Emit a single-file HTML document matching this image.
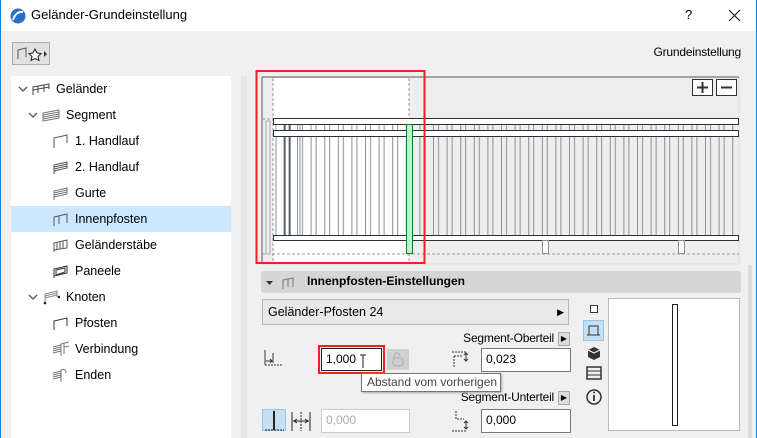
<!DOCTYPE html>
<html><head><meta charset="utf-8"><style>
*{margin:0;padding:0;box-sizing:border-box}
body{width:757px;height:438px;overflow:hidden;background:#f0f0f0;font-family:"Segoe UI","Liberation Sans",sans-serif;font-size:12px;color:#000;position:relative}
.a{position:absolute}
.title{left:0;top:0;width:757px;height:31px;background:#fff;border-left:1px solid #1883d7;border-right:1px solid #1883d7}
.tree{left:11px;top:76px;width:220px;height:362px;background:#fff}
.row{position:absolute;left:0;width:220px;height:26px;line-height:26px;font-size:12.5px}
.inp{background:#fff;border:1px solid #7a7a7a;height:23px;line-height:21px;padding-left:4px;font-size:12px}
.chev{position:absolute;top:9px}
</style></head><body>
<div class="a title">
 <svg class="a" style="left:9px;top:8px" width="16" height="16"><circle cx="8" cy="8" r="7.5" fill="#2a6fc9"/><path d="M3 12 Q6 3 13 4" stroke="#fff" stroke-width="2" fill="none"/></svg>
 <div class="a" style="left:30px;top:7px;font-size:13px">Geländer-Grundeinstellung</div>
 <div class="a" style="left:684px;top:7px;font-size:13px">?</div>
 <svg class="a" style="left:727px;top:9px" width="13" height="13"><path d="M1 1L12 12M12 1L1 12" stroke="#222" stroke-width="1.2"/></svg>
</div>
<div class="a" style="left:0;top:31px;width:1px;height:407px;background:#1883d7"></div>
<div class="a" style="left:756px;top:31px;width:1px;height:407px;background:#1883d7"></div>
<div class="a" style="left:12px;top:42px;width:38px;height:23px;border:1px solid #adadad;background:#e1e1e1">
 <svg width="36" height="21"><path d="M5 16V7l8-2v9" stroke="#555" fill="none"/><path d="M22 6l2 4 4 .5-3 3 1 4-4-2-4 2 1-4-3-3 4-.5z" stroke="#222" fill="#fff"/><path d="M31 8l3 3-3 3z" fill="#333"/></svg>
</div>
<div class="a" style="right:16px;top:45px;font-size:12px;letter-spacing:-0.2px">Grundeinstellung</div>

<div class="a tree">
 <div class="row" style="top:0"><svg class="chev" style="left:7px" width="10" height="8"><path d="M1 2l4 4 4-4" stroke="#555" fill="none" stroke-width="1.3"/></svg><svg class="a" style="left:21px;top:6px" width="18" height="14"><path d="M1 13V5l16-3v5M1 8l16-3M6 4v7M12 3v7" stroke="#444" fill="none"/></svg><span class="a" style="left:45px">Geländer</span></div>
 <div class="row" style="top:26px"><svg class="chev" style="left:17px" width="10" height="8"><path d="M1 2l4 4 4-4" stroke="#555" fill="none" stroke-width="1.3"/></svg><svg class="a" style="left:31px;top:6px" width="18" height="14"><path d="M1 13V5l16-3v8L1 13zM1 7l16-3M1 9l16-3M1 11l16-3" stroke="#777" fill="none"/></svg><span class="a" style="left:55px">Segment</span></div>
 <div class="row" style="top:52px"><svg class="a" style="left:41px;top:6px" width="16" height="15"><path d="M2 14V4l13-3v8" stroke="#555" fill="none"/></svg><span class="a" style="left:64px">1. Handlauf</span></div>
 <div class="row" style="top:78px"><svg class="a" style="left:41px;top:6px" width="16" height="15"><path d="M2 14V5l13-3v6L2 11M2 7l13-3M2 9l13-3" stroke="#555" fill="none"/></svg><span class="a" style="left:64px">2. Handlauf</span></div>
 <div class="row" style="top:104px"><svg class="a" style="left:41px;top:6px" width="16" height="15"><path d="M2 14V5l13-3v6L2 11M2 7l13-3M2 9l13-3" stroke="#777" fill="none"/></svg><span class="a" style="left:64px">Gurte</span></div>
 <div class="row" style="top:130px;background:#cce8ff"><svg class="a" style="left:41px;top:6px" width="16" height="15"><path d="M2 14V5l13-3v9M7 4v8" stroke="#555" fill="none"/></svg><span class="a" style="left:64px">Innenpfosten</span></div>
 <div class="row" style="top:156px"><svg class="a" style="left:41px;top:6px" width="16" height="15"><path d="M2 14V5l13-3v8L2 12M5 5v7M8 4v7M11 3v7" stroke="#555" fill="none"/></svg><span class="a" style="left:64px">Geländerstäbe</span></div>
 <div class="row" style="top:182px"><svg class="a" style="left:41px;top:6px" width="16" height="15"><path d="M2 14V5l13-3v7L2 12zM4 6l9-2v4l-9 3z" stroke="#333" fill="none"/></svg><span class="a" style="left:64px">Paneele</span></div>
 <div class="row" style="top:208px"><svg class="chev" style="left:17px" width="10" height="8"><path d="M1 2l4 4 4-4" stroke="#555" fill="none" stroke-width="1.3"/></svg><svg class="a" style="left:31px;top:5px" width="18" height="16"><path d="M3 14V5l12-3v6M3 7l12-3M3 9l12-3" stroke="#888" fill="none"/><circle cx="3" cy="14" r="1.3" fill="#222"/><circle cx="17" cy="8" r="1.3" fill="#222"/></svg><span class="a" style="left:55px">Knoten</span></div>
 <div class="row" style="top:234px"><svg class="a" style="left:41px;top:6px" width="16" height="15"><path d="M2 14V5l13-3v8" stroke="#333" fill="none"/></svg><span class="a" style="left:64px">Pfosten</span></div>
 <div class="row" style="top:260px"><svg class="a" style="left:41px;top:5px" width="18" height="16"><path d="M1 6l8-2M1 8l8-2M1 10l8-2M1 12l8-2M9 3v12M12 3v10M9 3l8-2M12 6l5-1" stroke="#777" fill="none"/></svg><span class="a" style="left:64px">Verbindung</span></div>
 <div class="row" style="top:286px"><svg class="a" style="left:41px;top:5px" width="16" height="16"><path d="M1 6l8-2M1 8l8-2M1 10l8-2M1 12l8-2M9 3v12M9 3q5-2 5 3" stroke="#777" fill="none"/></svg><span class="a" style="left:64px">Enden</span></div>
</div>
<div class="a" style="left:241px;top:76px;width:6px;height:362px;background:#e6e6e6"></div>

<svg class="a" style="left:0;top:0" width="757" height="438">
 <defs><pattern id="b" patternUnits="userSpaceOnUse" x="297" y="0" width="13.6" height="10"><rect x="0.5" y="-1" width="5" height="12" fill="none" stroke="#8a9096"/></pattern></defs>
 <rect x="262" y="77" width="477" height="187" fill="#eeeeee" stroke="#dcdcdc"/>
 <path d="M262 77H739" stroke="#888" stroke-width="1.5"/><path d="M262 77V264" stroke="#888" stroke-width="1.5"/>
 <rect x="273" y="78" width="136" height="185" fill="#fff"/>
 <path d="M273 78V264M409 78V264M262 119H273M262 254H739" stroke="#999" stroke-dasharray="3 2" fill="none"/>
 <rect x="296" y="124" width="441" height="111" fill="url(#b)"/>
 <path d="M276 124V235M284 124V235M289 124V235M300 124V235" stroke="#8a9096"/>
 <path d="M285 124V235M290 124V235" stroke="#2a3138"/>
 <rect x="266" y="121" width="4" height="133" fill="none" stroke="#aaa"/>
 <rect x="273.5" y="118.5" width="465" height="6" fill="#fff" stroke="#2a3138"/>
 <rect x="273.5" y="130.5" width="465" height="6" fill="#fff" stroke="#2a3138"/>
 <rect x="273.5" y="235.5" width="465" height="5" fill="#fff" stroke="#2a3138"/>
 <rect x="542.5" y="240.5" width="6" height="13" fill="#fff" stroke="#8a9096"/>
 <rect x="678.5" y="240.5" width="6" height="13" fill="#fff" stroke="#8a9096"/>
 <rect x="406.5" y="124.5" width="6" height="129" fill="#bff0c8" stroke="#1a7a2a"/>
 <rect x="256.5" y="71" width="168" height="192" fill="none" stroke="#ee2222" stroke-width="2"/>
 <rect x="692.5" y="79.5" width="20" height="16" fill="#fff" stroke="#2a3138"/><path d="M697 87.5h11M702.5 82v11" stroke="#2a3138" stroke-width="2"/>
 <rect x="716.5" y="79.5" width="20" height="16" fill="#fff" stroke="#2a3138"/><path d="M721 87.5h11" stroke="#2a3138" stroke-width="2"/>
</svg>

<div class="a" style="left:261px;top:271px;width:480px;height:22px;background:#d6d6d6;border-radius:3px"></div>
<svg class="a" style="left:265px;top:276px" width="40" height="14"><path d="M1 5h7l-3.5 4z" fill="#333"/><path d="M18 13V4l10-2v9M23 3v8" stroke="#777" fill="none"/></svg>
<div class="a" style="left:307px;top:274px;font-weight:bold;font-size:12px">Innenpfosten-Einstellungen</div>

<div class="a" style="left:262px;top:299px;width:307px;height:26px;border:1px solid #b5b5b5;background:#e9e9e9;line-height:24px;padding-left:5px;font-size:12.5px">Geländer-Pfosten 24<span class="a" style="right:4px;top:0;font-size:9px">▶</span></div>

<div class="a" style="right:203px;top:331px;font-size:12px;letter-spacing:-0.2px">Segment-Oberteil</div>
<div class="a" style="left:558px;top:332px;width:12px;height:14px;background:#ddd;border:1px solid #aaa;font-size:8px;line-height:12px;text-align:center">▶</div>
<div class="a" style="right:203px;top:390px;font-size:12px;letter-spacing:-0.2px">Segment-Unterteil</div>
<div class="a" style="left:558px;top:391px;width:12px;height:14px;background:#ddd;border:1px solid #aaa;font-size:8px;line-height:12px;text-align:center">▶</div>

<svg class="a" style="left:263px;top:348px" width="22" height="20"><path d="M2 2V17M10 5V15" stroke="#333" fill="none"/><path d="M2 17h18" stroke="#333" stroke-dasharray="2 1"/><path d="M3 13h6M7 11l2 2-2 2" stroke="#333" fill="none"/></svg>
<div class="a" style="left:318px;top:345px;width:67px;height:29px;border:2px solid #ee2222"></div>
<div class="a inp" style="left:321px;top:348px;width:61px;height:23px;border-color:#222">1,000</div>
<svg class="a" style="left:359px;top:354px" width="8" height="16"><path d="M1 1h6M4 1v13" stroke="#222"/></svg>
<div class="a" style="left:387px;top:349px;width:22px;height:21px;background:#d0d0d0"><svg width="22" height="21"><path d="M7 9V7a3 3 0 0 1 6 0" stroke="#aaa" fill="none"/><rect x="6" y="9" width="10" height="8" rx="3" fill="none" stroke="#aaa"/></svg></div>
<div class="a" style="left:361px;top:373px;width:140px;height:19px;background:#fff;border:1px solid #767676;box-shadow:1px 1px 2px #aaa;font-size:12px;line-height:17px;padding-left:5px;color:#444">Abstand vom vorherigen</div>

<svg class="a" style="left:450px;top:348px" width="22" height="24"><path d="M4 8h8M4 8v12M2 4h14" stroke="#333" stroke-dasharray="2 1" fill="none"/><path d="M16 5v8M14 7l2-2 2 2M14 11l2 2 2-2" stroke="#333" fill="none"/></svg>
<div class="a inp" style="left:481px;top:348px;width:90px;height:24px">0,023</div>

<div class="a" style="left:262px;top:409px;width:24px;height:22px;background:#c5dff5;border:1px solid #99c5ea"></div>
<svg class="a" style="left:262px;top:409px" width="54" height="24"><path d="M12 2v19" stroke="#222" stroke-width="2"/><path d="M3 21h19" stroke="#222" stroke-dasharray="2 1"/><path d="M30 3v19M48 3v19M31 12h16M43 10l3 2-3 2M35 10l-3 2 3 2" stroke="#222" fill="none"/><path d="M39 3v19" stroke="#222" stroke-dasharray="2 1"/></svg>
<div class="a inp" style="left:321px;top:409px;width:89px;height:24px;color:#aaa;border-color:#ccc">0,000</div>
<svg class="a" style="left:450px;top:409px" width="22" height="24"><path d="M6 2v8h8M2 22h14" stroke="#333" stroke-dasharray="2 1" fill="none"/><path d="M16 12v8M14 14l2-2 2 2M14 18l2 2 2-2" stroke="#333" fill="none"/></svg>
<div class="a inp" style="left:481px;top:409px;width:90px;height:24px">0,000</div>

<svg class="a" style="left:583px;top:300px" width="22" height="110"><rect x="7.5" y="5.5" width="7" height="7" fill="#fff" stroke="#333"/><rect x="0.5" y="20.5" width="20" height="20" fill="#c5dff5" stroke="#99c5ea"/><path d="M6 35v-9h9v9M4 35h13" stroke="#333" fill="none"/><path d="M5 50l6-3 6 3v7l-6 3-6-3z" fill="#333"/><path d="M5 50l6 3 6-3" stroke="#fff" fill="none"/><rect x="4" y="67" width="14" height="12" fill="none" stroke="#333" stroke-width="1.5"/><path d="M4 71h14M4 75h14" stroke="#333"/><circle cx="11" cy="97" r="7" fill="none" stroke="#333" stroke-width="1.5"/><path d="M11 95v6" stroke="#333" stroke-width="1.8"/><circle cx="11" cy="92.5" r="1" fill="#333"/></svg>

<div class="a" style="left:608px;top:298px;width:132px;height:133px;background:#fff;border:1px solid #bbb"></div>
<div class="a" style="left:672px;top:304px;width:6px;height:122px;border:1px solid #222;background:#fff"></div>
<div class="a" style="left:748px;top:265px;width:4px;height:173px;background:#ddd"></div>
</body></html>
